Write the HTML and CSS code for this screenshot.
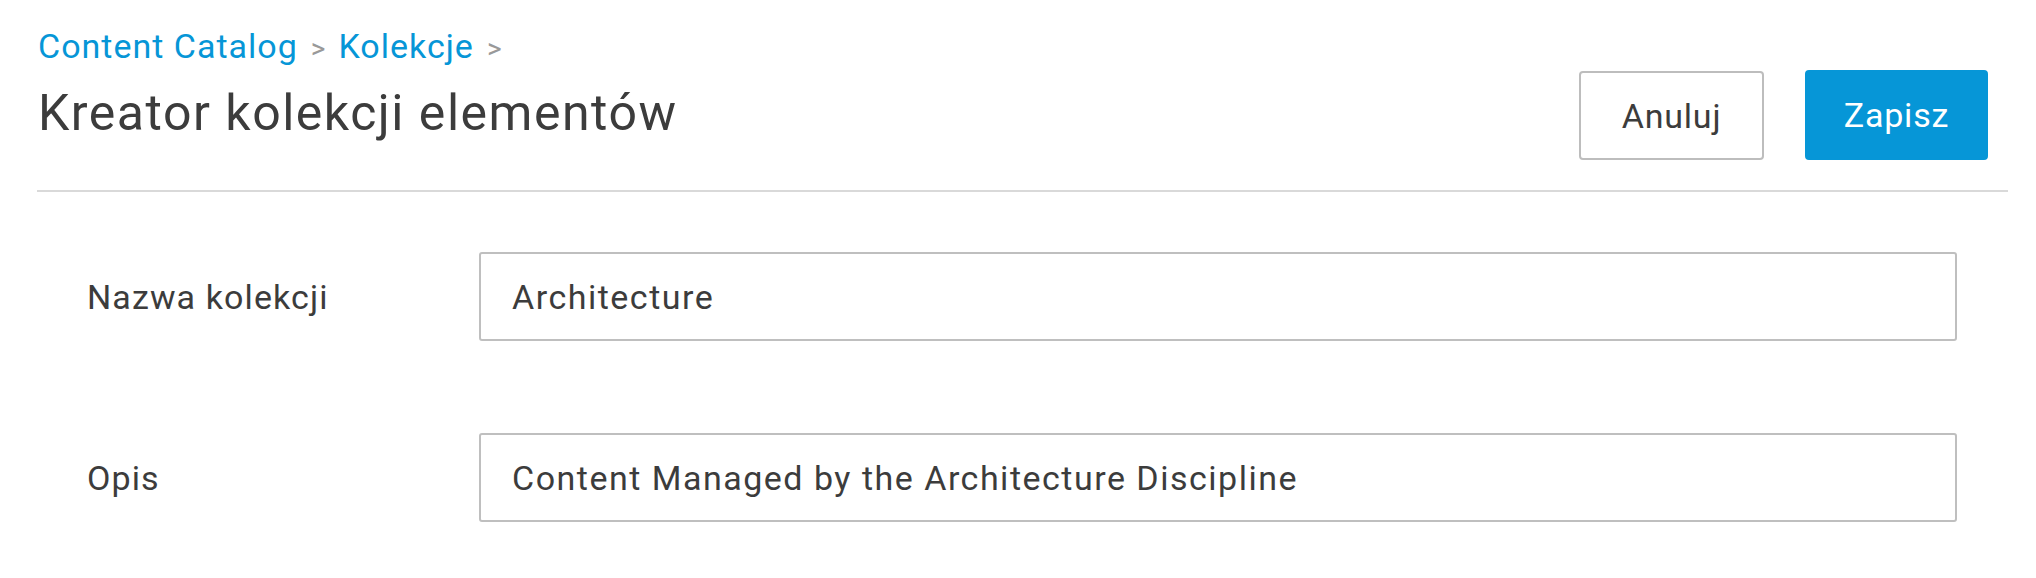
FILE: index.html
```html
<!DOCTYPE html>
<html lang="pl">
<head>
<meta charset="utf-8">
<title>Kreator kolekcji elementów</title>
<link rel="stylesheet" href="styles.css">
</head>
<body>
<div class="page">
  <header class="header">
    <div class="heading">
      <nav class="crumbs">
        <a class="crumb" href="#">Content Catalog</a>
        <span class="crumb-sep">&gt;</span>
        <a class="crumb" href="#">Kolekcje</a>
        <span class="crumb-sep">&gt;</span>
      </nav>
      <h1 class="title">Kreator kolekcji elementów</h1>
    </div>
    <div class="actions">
      <button class="btn btn-secondary" type="button">Anuluj</button>
      <button class="btn btn-primary" type="button">Zapisz</button>
    </div>
  </header>
  <div class="divider"></div>
  <form class="form">
    <div class="row">
      <label class="label" for="name">Nazwa kolekcji</label>
      <input class="input" id="name" type="text" value="Architecture">
    </div>
    <div class="row">
      <label class="label" for="desc">Opis</label>
      <input class="input" id="desc" type="text" value="Content Managed by the Architecture Discipline">
    </div>
  </form>
</div>
</body>
</html>
```
FILE: styles.css
```css
* { box-sizing: border-box; }
html, body { margin: 0; padding: 0; background: #ffffff; }
body {
  font-family: Roboto, "Noto Sans", sans-serif;
  color: #3c3c3c;
}
.page {
  padding: 0 28px 0 37px;
}
.header {
  display: flex;
  justify-content: space-between;
  align-items: flex-start;
  padding: 26px 20px 30px 1px;
}
.heading {
  display: flex;
  flex-direction: column;
}
.crumbs {
  display: flex;
  align-items: baseline;
  gap: 13px;
  font-size: 34px;
  line-height: 40px;
  letter-spacing: 1px;
}
.crumb {
  color: #0696d7;
  text-decoration: none;
}
.crumb-sep {
  color: #999999;
  font-size: 28px;
  letter-spacing: 0;
}
.title {
  margin: 14px 0 0;
  font-size: 50px;
  line-height: 60px;
  font-weight: 400;
  letter-spacing: 1.5px;
  color: #3c3c3c;
}
.actions {
  display: flex;
  gap: 41px;
  margin-top: 45px;
}
.btn {
  height: 89px;
  padding: 0;
  border: 2px solid #bdbdbd;
  border-radius: 4px;
  background: #ffffff;
  color: #3c3c3c;
  font-family: inherit;
  font-size: 34px;
  letter-spacing: 0.8px;
  text-align: center;
  cursor: pointer;
}
.btn-secondary {
  width: 185px;
}
.btn-primary {
  width: 183px;
  background: #0696d7;
  border-color: #0696d7;
  color: #ffffff;
  height: 90px;
  margin-top: -1px;
}
.divider {
  height: 2px;
  background: #d9d9d9;
}
.form {
  display: flex;
  flex-direction: column;
  gap: 92px;
  padding: 60px 51px 0 50px;
}
.row {
  display: flex;
  align-items: center;
}
.label {
  width: 392px;
  flex: none;
  font-size: 34px;
  letter-spacing: 1.1px;
  color: #3c3c3c;
}
.input {
  flex: 1;
  height: 89px;
  padding: 0 31px;
  border: 2px solid #bfbfbf;
  border-radius: 3px;
  font-family: inherit;
  font-size: 34px;
  letter-spacing: 1.5px;
  color: #3c3c3c;
  background: #ffffff;
  outline: none;
}
```
